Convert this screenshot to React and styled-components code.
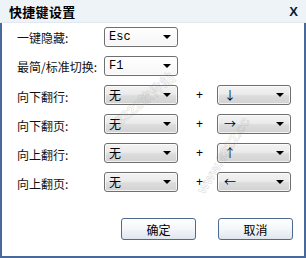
import React from "react";
import styled, { createGlobalStyle } from "styled-components";

const Global = createGlobalStyle`
  html, body { margin: 0; padding: 0; background: #fff; }
  body { font-family: "Noto Sans CJK SC", "Noto Sans", sans-serif; }
`;

const Dialog = styled.div`
  width: 306px;
  height: 258px;
  box-sizing: border-box;
  display: flex;
  flex-direction: column;
  background: #fff;
  position: relative;
  overflow: hidden;
`;

const TitleBar = styled.div`
  height: 22px;
  flex: none;
  display: flex;
  align-items: center;
  justify-content: space-between;
  padding: 0 8px 0 9px;
  background: #eef3f8;
  border-bottom: 1px solid #e2e8ef;
`;

const Title = styled.div`
  font-size: 13px;
  font-weight: 700;
  color: #000;
  letter-spacing: 0.3px;
`;

const Close = styled.div`
  font-family: "Liberation Sans", Arial, sans-serif;
  font-size: 13px;
  font-weight: 700;
  color: #0b1a3a;
`;

const Body = styled.div`
  flex: 1;
  border-left: 2px solid #49699a;
  border-right: 2px solid #49699a;
  border-bottom: 2px solid #49699a;
  padding: 4px 0 0 15px;
  display: flex;
  flex-direction: column;
`;

const Form = styled.div`
  display: grid;
  grid-template-columns: 87px 74px 39px 74px;
  grid-template-rows: 20px 20px;
  grid-auto-rows: 20px;
  row-gap: 9px;
  align-items: center;
`;

const Label = styled.div`
  font-size: 12px;
  color: #111;
  white-space: nowrap;
  margin-top: ${(p) => (p.$shift ? "2px" : "0")};
`;

const Plus = styled.div`
  font-family: "Liberation Sans", Arial, sans-serif;
  font-size: 12px;
  text-align: center;
  color: #000;
  padding-left: 4px;
`;

const Select = styled.div`
  height: 20px;
  box-sizing: border-box;
  border: 1px solid #6f6f6f;
  border-radius: 3px;
  display: flex;
  align-items: center;
  justify-content: space-between;
  padding: 0 6px 0 4px;
  background: ${(p) =>
    p.$plain
      ? "linear-gradient(#ffffff, #f6f6f6)"
      : "linear-gradient(#f3f3f3 0%, #ebebeb 45%, #dcdcdc 55%, #d2d2d2 100%)"};
  box-shadow: inset 0 0 0 1px rgba(255, 255, 255, 0.7);
`;

const Value = styled.span`
  font-family: ${(p) =>
    p.$mono
      ? '"Liberation Mono", "Courier New", monospace'
      : '"Noto Sans CJK SC", "Noto Sans", sans-serif'};
  font-size: 12px;
  color: #000;
  line-height: 1;
  padding-left: ${(p) => (p.$arrow ? "2px" : "0")};
`;

const Caret = styled.span`
  width: 0;
  height: 0;
  border-left: 4px solid transparent;
  border-right: 4px solid transparent;
  border-top: 4px solid #000;
`;

const Buttons = styled.div`
  display: flex;
  gap: 22px;
  margin-top: 26px;
  padding-left: 104px;
`;

const Button = styled.button`
  width: 75px;
  height: 22px;
  box-sizing: border-box;
  border: 1px solid #4d6a91;
  border-radius: 3px;
  background: linear-gradient(#ffffff 0%, #f3f6fa 50%, #dfe6ee 100%);
  font-family: "Noto Sans CJK SC", "Noto Sans", sans-serif;
  font-size: 12px;
  color: #000;
  padding: 0;
  cursor: pointer;
`;

const Watermark = styled.div`
  position: absolute;
  left: ${(p) => p.$x}px;
  top: ${(p) => p.$y}px;
  transform: rotate(${(p) => p.$deg}deg);
  transform-origin: left center;
  font-family: "Liberation Sans", "Noto Sans CJK SC", sans-serif;
  font-size: 14px;
  font-weight: 700;
  color: transparent;
  -webkit-text-stroke: 0.6px rgba(160, 160, 160, 0.35);
  white-space: nowrap;
  pointer-events: none;
`;

const Empty = styled.div``;

function Dropdown({ value, mono, plain, arrow }) {
  return (
    <Select $plain={plain}>
      <Value $mono={mono} $arrow={arrow}>{value}</Value>
      <Caret />
    </Select>
  );
}

const rows = [
  { label: "向下翻行:", key: "↓" },
  { label: "向下翻页:", key: "→" },
  { label: "向上翻行:", key: "↑" },
  { label: "向上翻页:", key: "←" },
];

export default function App() {
  return (
    <>
      <Global />
      <Dialog>
        <TitleBar>
          <Title>快捷键设置</Title>
          <Close>X</Close>
        </TitleBar>
        <Body>
          <Form>
            <Label>一键隐藏:</Label>
            <Dropdown value="Esc" mono plain />
            <Empty />
            <Empty />
            <Label>最简/标准切换:</Label>
            <Dropdown value="F1" mono plain />
            <Empty />
            <Empty />
            {rows.map((r) => (
              <React.Fragment key={r.label}>
                <Label $shift>{r.label}</Label>
                <Dropdown value="无" />
                <Plus>+</Plus>
                <Dropdown value={r.key} arrow />
              </React.Fragment>
            ))}
          </Form>
          <Buttons>
            <Button>确定</Button>
            <Button>取消</Button>
          </Buttons>
        </Body>
        <Watermark $x={116} $y={112} $deg={-40}>3322软件站</Watermark>
        <Watermark $x={200} $y={184} $deg={-58}>www.3322.cc</Watermark>
      </Dialog>
    </>
  );
}
